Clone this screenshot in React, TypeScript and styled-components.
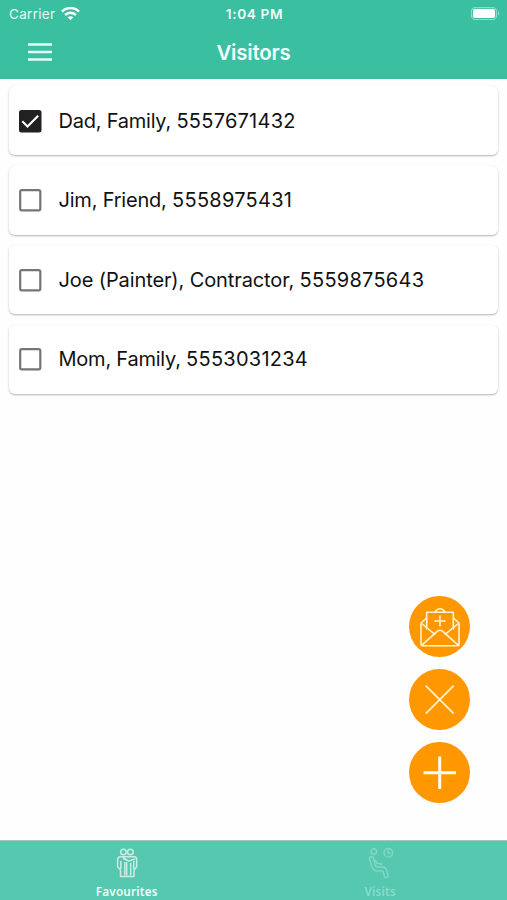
import React from "react";
import styled, { createGlobalStyle } from "styled-components";

const GlobalStyle = createGlobalStyle`
  * { box-sizing: border-box; }
  body { margin: 0; background: #fff; font-family: Inter, "Liberation Sans", sans-serif; }
  button { font: inherit; border: 0; padding: 0; cursor: pointer; }
`;

const Screen = styled.div`
  display: flex;
  flex-direction: column;
  width: 100%;
  height: 900px;
  overflow: hidden;
  background: #fefefe;
`;

const Header = styled.header`
  flex: none;
  height: 79px;
  color: #fff;
  background: #3abfa1;
`;

const StatusBar = styled.div`
  display: grid;
  grid-template-columns: 1fr auto 1fr;
  align-items: center;
  height: 27px;
  padding: 0 7px 0 9px;
`;

const Carrier = styled.div`
  display: flex;
  align-items: center;
  gap: 6px;
  font-size: 13.5px;
  color: #e4fbf5;
  letter-spacing: 0.3px;
`;

const Clock = styled.div`
  font-size: 13.7px;
  font-weight: 600;
  letter-spacing: 0.6px;
  color: #effdf9;
`;

const Battery = styled.svg`
  justify-self: end;
  display: block;
`;

const NavBar = styled.div`
  display: grid;
  grid-template-columns: 80px 1fr 80px;
  align-items: center;
  height: 50px;
`;

const MenuButton = styled.button`
  display: flex;
  justify-content: center;
  background: none;
`;

const Title = styled.h1`
  margin: 0;
  padding-top: 1px;
  text-align: center;
  font-size: 20.5px;
  line-height: 24px;
  font-weight: 600;
  letter-spacing: -0.2px;
  color: #f1fffb;
`;

const VisitorList = styled.main`
  position: relative;
  flex: 1;
  display: flex;
  flex-direction: column;
  gap: 10.5px;
  padding: 7.2px 9px 0;
`;

const VisitorCard = styled.label`
  display: flex;
  align-items: center;
  height: 69px;
  padding-left: 9px;
  border-radius: 6px;
  background: #fff;
  box-shadow: 0 1px 2px rgba(0, 0, 0, 0.3);
`;

const CheckIcon = styled.svg`
  flex: none;
  margin-right: 16.5px;
`;

const VisitorText = styled.span`
  font-size: 20px;
  line-height: 24px;
  white-space: pre;
  color: #111;
`;

const VisitorName = styled.span<{ $tracking: number }>`
  letter-spacing: ${(p) => p.$tracking}px;
`;

const Phone = styled.span`
  letter-spacing: 0.25px;
`;

const Actions = styled.div`
  position: absolute;
  right: 37px;
  bottom: 36.3px;
  display: flex;
  flex-direction: column;
  gap: 12.3px;
`;

const ActionButton = styled.button`
  display: flex;
  width: 61px;
  height: 61px;
  border-radius: 50%;
  background: #ff9800;
`;

const TabBar = styled.nav`
  flex: none;
  display: flex;
  height: 60.5px;
  border-top: 1px solid #9ec9bd;
  background: #56c8af;
`;

const Tab = styled.button<{ $active?: boolean }>`
  flex: 1;
  display: flex;
  flex-direction: column;
  align-items: center;
  padding-top: 6px;
  background: none;
  color: ${(p) => (p.$active ? "#effff9" : "#8cdcca")};
`;

const TabLabel = styled.span`
  margin-top: 4px;
  font-family: "Noto Sans", sans-serif;
  font-size: 11.7px;
  line-height: 16px;
  font-weight: 600;
  letter-spacing: 0.2px;
`;

const visitors = [
  { name: "Dad, Family, ", phone: "5557671432", checked: true, tracking: -0.23 },
  { name: "Jim, Friend, ", phone: "5558975431", checked: false, tracking: -0.2 },
  { name: "Joe (Painter), Contractor, ", phone: "5559875643", checked: false, tracking: -0.11 },
  { name: "Mom, Family, ", phone: "5553031234", checked: false, tracking: -0.23 },
];

function Check({ checked }: { checked: boolean }) {
  return (
    <CheckIcon width="24" height="24" viewBox="0 0 24 24" fill="none">
      {checked ? (
        <>
          <rect x="1" y="1" width="22.5" height="22.5" rx="2.5" fill="#212121" />
          <path d="M4.3 12.3l5.2 5.2L20.2 6.8" stroke="#fff" strokeWidth="2.1" />
        </>
      ) : (
        <rect x="2.2" y="2.2" width="20.1" height="20.1" rx="1.6" stroke="#757575" strokeWidth="2.2" />
      )}
    </CheckIcon>
  );
}

export default function App() {
  return (
    <Screen>
      <GlobalStyle />
      <Header>
        <StatusBar>
          <Carrier>
            <span>Carrier</span>
            <svg width="19" height="14" viewBox="0 0 19 14" fill="none" stroke="#fff" strokeWidth="2.5">
              <path d="M1 4.6C5.8-.2 13.2-.2 18 4.6" />
              <path d="M4.1 8c3.1-3 7.7-3 10.8 0" />
              <path d="M9.5 13.2L6.6 10.3c1.6-1.5 4.2-1.5 5.8 0z" fill="#fff" stroke="none" />
            </svg>
          </Carrier>
          <Clock>1:04 PM</Clock>
          <Battery width="30" height="14" viewBox="0 0 30 14">
            <rect x="1.5" y="0.6" width="25" height="11.9" rx="3.6" fill="none" stroke="#8edbc8" strokeWidth="1.2" />
            <rect x="3" y="2" width="22" height="9" rx="1.8" fill="#fff" />
            <path d="M28 4.3c1.8.6 1.8 3.6 0 4.2z" fill="#8edbc8" />
          </Battery>
        </StatusBar>
        <NavBar>
          <MenuButton aria-label="Menu">
            <svg width="26" height="20" viewBox="0 0 26 20" stroke="#e6fff7" strokeWidth="2.6">
              <path d="M1 2.5h24M1 10h24M1 17.5h24" />
            </svg>
          </MenuButton>
          <Title>Visitors</Title>
        </NavBar>
      </Header>
      <VisitorList>
        {visitors.map((v) => (
          <VisitorCard key={v.phone}>
            <Check checked={v.checked} />
            <VisitorText>
              <VisitorName $tracking={v.tracking}>{v.name}</VisitorName>
              <Phone>{v.phone}</Phone>
            </VisitorText>
          </VisitorCard>
        ))}
        <Actions>
          <ActionButton aria-label="Invite visitor">
            <svg width="61" height="61" viewBox="0 0 61 61" fill="none" stroke="#fff3d2" strokeWidth="1.6" strokeLinejoin="round">
              <path d="M17.7 33.5V16.2h26.6v17.3M17.7 21.8L12 27v21.5c0 .8.5 1.3 1.3 1.3h35.4c.8 0 1.3-.5 1.3-1.3V27l-5.7-5.2" />
              <path d="M12 27l14.2 11.7M50 27L35.8 38.7M12.5 49.3L28 35.6c1.8-1.6 4.2-1.6 6 0l15.5 13.7M26 16c2.6-4.3 7.4-4.3 10 0" />
              <path d="M31 19.5v11M25.5 25h11" />
            </svg>
          </ActionButton>
          <ActionButton aria-label="Close">
            <svg width="61" height="61" viewBox="0 0 61 61" stroke="#fff3d2" strokeWidth="1.7">
              <path d="M16.7 16.7l28 28M44.7 16.7l-28 28" />
            </svg>
          </ActionButton>
          <ActionButton aria-label="Add visitor">
            <svg width="61" height="61" viewBox="0 0 61 61" stroke="#fffbed" strokeWidth="3">
              <path d="M30.7 14.5v32.5M14.5 30.7H47" />
            </svg>
          </ActionButton>
        </Actions>
      </VisitorList>
      <TabBar>
        <Tab $active>
          <svg width="24" height="32" viewBox="0 0 24 32" fill="none" stroke="#c5eee4" strokeWidth="1.5" strokeLinejoin="round">
            <circle cx="8.4" cy="5" r="2.8" />
            <circle cx="15.4" cy="5" r="2.8" />
            <path d="M5.5 9.8h14c1.8 0 2.2 1.5 2.2 3v7l-2.7 3.2v6.5H5.5V23l-2.9-3.2v-6.5c0-2.3 1-3.5 2.9-3.5z" />
            <path d="M5.8 14v8M18.8 14v8M9.8 15v13.5M11.7 15v13.5M15.7 16v12.5M8 11.5l6 2.5 6-2M8 10l4 3" />
          </svg>
          <TabLabel>Favourites</TabLabel>
        </Tab>
        <Tab>
          <svg width="28" height="32" viewBox="0 0 28 32" fill="none" strokeLinejoin="round" strokeLinecap="round">
            <path d="M5.5 11.5l2.2 7.6c.6 2 1.5 2.8 3.6 2.8h5.2c1.5 0 2.1.5 2.4 1.8l1.3 5" stroke="#83d9c6" strokeWidth="5.2" />
            <path d="M5.5 11.5l2.2 7.6c.6 2 1.5 2.8 3.6 2.8h5.2c1.5 0 2.1.5 2.4 1.8l1.3 5" stroke="#56c8af" strokeWidth="2.5" />
            <g stroke="#83d9c6" strokeWidth="1.4">
              <circle cx="7.8" cy="4.5" r="2.8" />
              <circle cx="22.3" cy="5.8" r="4.3" />
              <path d="M22.3 3.4v2.8h1.8M9.5 13.5l1.6 2.8 4.4.9" />
            </g>
          </svg>
          <TabLabel>Visits</TabLabel>
        </Tab>
      </TabBar>
    </Screen>
  );
}
